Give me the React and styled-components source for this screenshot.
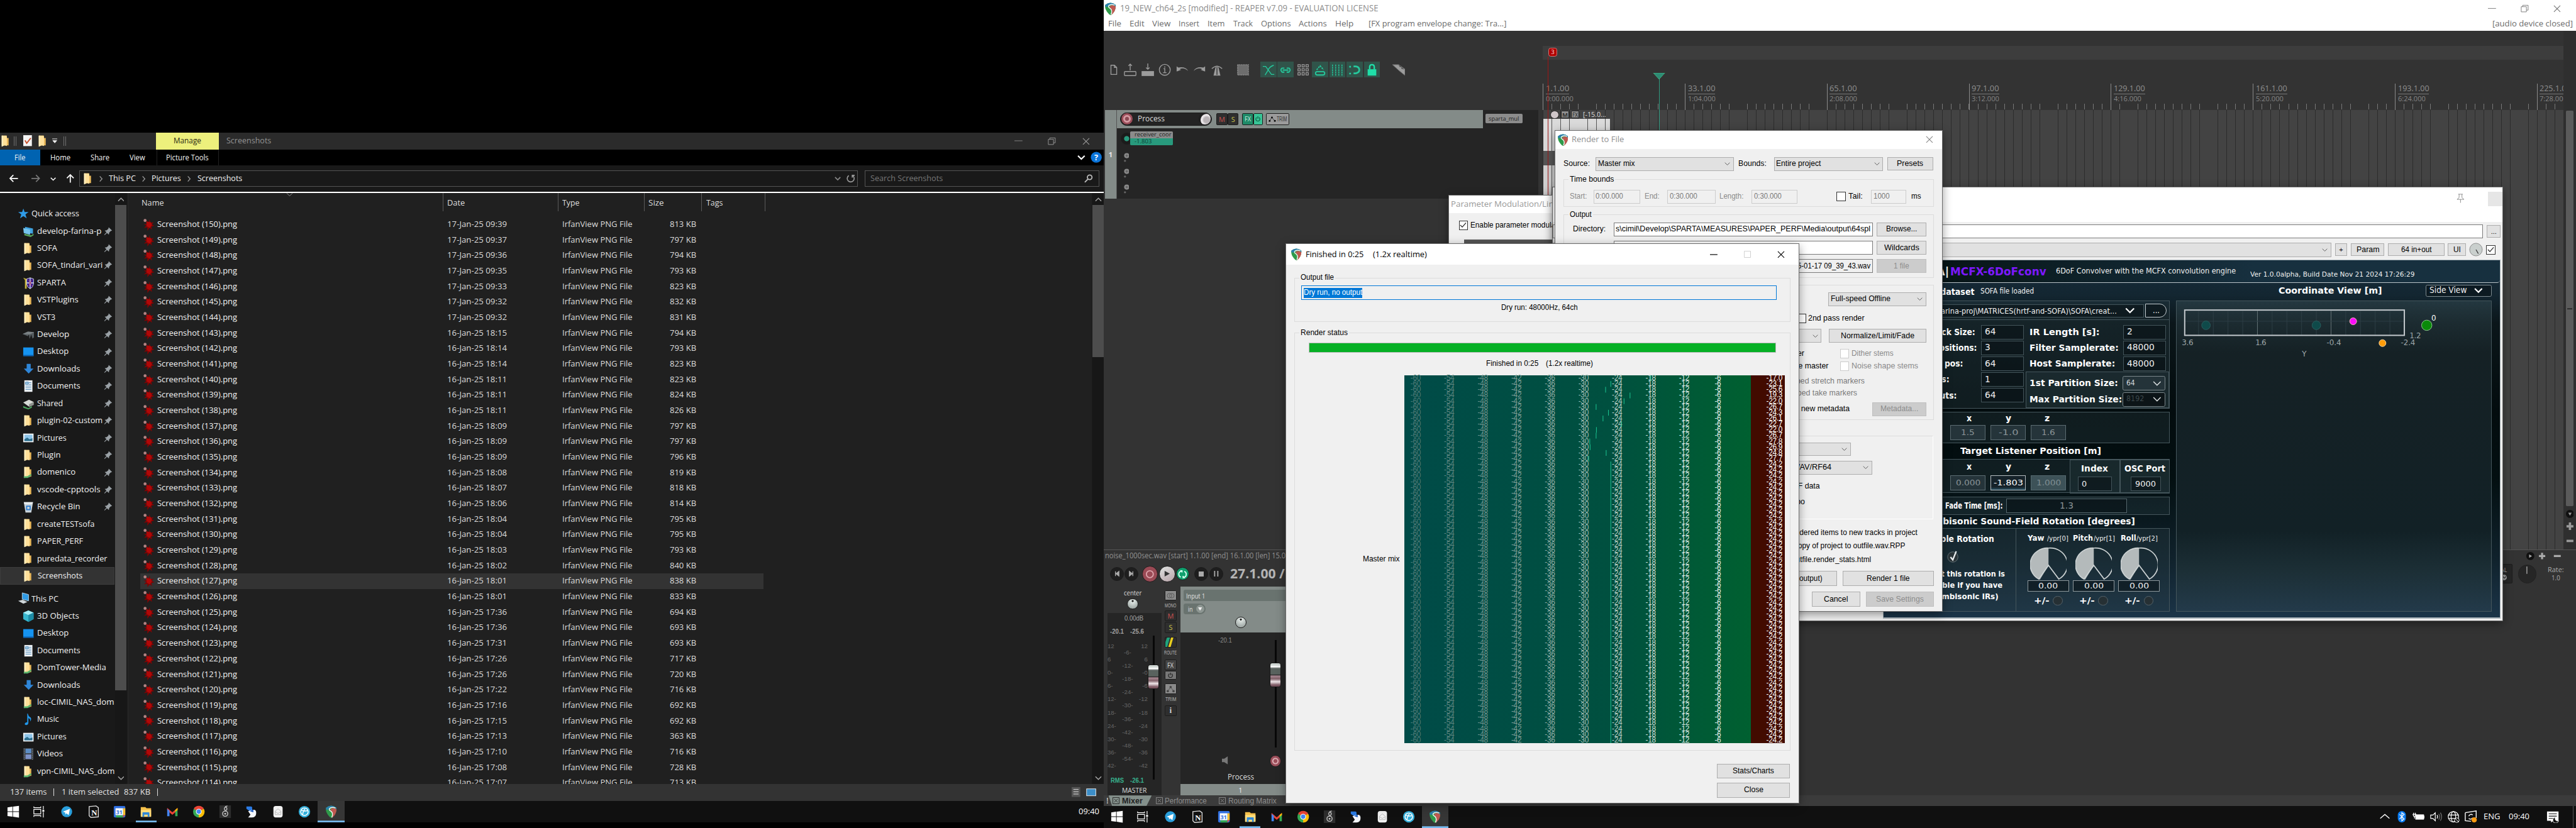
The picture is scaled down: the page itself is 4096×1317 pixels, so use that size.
import React, { useLayoutEffect, useRef, useState } from "react";
import styled, { createGlobalStyle, css } from "styled-components";

const UI = '"Open Sans", "Noto Sans", sans-serif';
const MS = '"Liberation Sans", Arial, sans-serif';
const PL = '"DejaVu Sans", Verdana, sans-serif';
const PLB = '"DejaVu Sans Condensed", "DejaVu Sans", sans-serif';

const Global = createGlobalStyle`
  html, body { margin: 0; padding: 0; background: #080808; overflow: hidden; }
  * { box-sizing: border-box; }
  svg { display: block; flex: none; }
`;

/* ---------- text that is fitted to a known advance width ---------- */
const TextBox = styled.span`
  display: block;
  flex: none;
  white-space: pre;
  line-height: 1.2;
  font-family: ${(p) => p.$f || UI};
  font-size: ${(p) => p.$s || 14.5}px;
  font-weight: ${(p) => (p.$b ? 700 : 400)};
  color: ${(p) => p.$c || "inherit"};
  ${(p) => p.$w && css`width: ${p.$w}px;`}
  margin-left: ${(p) => p.$ml || 0}px;
  margin-right: ${(p) => p.$mr || 0}px;
`;
const Fitted = styled.span`
  display: inline-block;
  transform-origin: 0 50%;
`;
function T({ w, s, c, b, f, ml, mr, children }) {
  const outer = useRef(null);
  const inner = useRef(null);
  const [k, setK] = useState(1);
  useLayoutEffect(() => {
    if (!w) return;
    const a = outer.current.getBoundingClientRect().width;
    const n = inner.current.getBoundingClientRect().width;
    if (n > 0) setK(a / n);
  }, [w]);
  return (
    <TextBox ref={outer} $w={w} $s={s} $c={c} $b={b} $f={f} $ml={ml} $mr={mr}>
      <Fitted ref={inner} style={k === 1 ? undefined : { transform: `scaleX(${k})` }}>{children}</Fitted>
    </TextBox>
  );
}
const M = (p) => <T f={MS} s={13.5} c="#000" {...p} />;

/* ---------- shared layout ---------- */
const Row = styled.div`
  display: flex;
  flex: none;
  align-items: ${(p) => p.$a || "center"};
  justify-content: ${(p) => (p.$end ? "flex-end" : p.$center ? "center" : "flex-start")};
  height: ${(p) => (p.$h ? p.$h + "px" : "auto")};
  margin-top: ${(p) => p.$mt || 0}px;
  padding-left: ${(p) => p.$pl || 0}px;
  padding-right: ${(p) => p.$pr || 0}px;
`;
const Col = styled.div`
  display: flex;
  flex: none;
  flex-direction: column;
  width: ${(p) => (p.$w ? p.$w + "px" : "auto")};
  margin-left: ${(p) => p.$ml || 0}px;
  padding-top: ${(p) => p.$pt || 0}px;
`;
const Grow = styled.div`flex: 1;`;

const Screen = styled.div`
  display: flex;
  width: 4480px;
  height: 1440px;
  zoom: 0.9142857;
  overflow: hidden;
  background: #000;
  font-family: ${UI};
`;
const LeftMonitor = styled.div`
  display: flex;
  flex-direction: column;
  width: 1920px;
  padding-top: 231px;
`;
const RightMonitor = styled.div`
  position: relative;
  display: flex;
  flex-direction: column;
  width: 2560px;
  background: #333;
  overflow: hidden;
`;

/* ---------- icons ---------- */
const Logo = ({ s = 22 }) => (
  <svg width={s * 0.86} height={s} viewBox="0 0 19 22">
    <path d="M.5 4Q9.500-3 18.500 4Q20 14 10.500 22Q8 22 5 18Q-1 11 .5 4Z" fill="#2f9a4a" />
    <path d="M.5 4Q9.500-3 18.500 4L18.800 7Q14 3 9 4Q5 4.500 4.500 8L.4 7Z" fill="#2a80ad" />
    <path d="M9 6Q14 3 18.800 7Q18.500 16 10.500 22Q15 13 8.500 9Q8 7 9 6Z" fill="#bf5850" />
    <path d="M17 4.500Q10 2 6.500 5.500Q5 8 9.500 10.500Q13.500 14 10.500 21" fill="none" stroke="#f4f4f4" strokeWidth="1.600" />
  </svg>
);
const Folder = ({ net }) => (
  <svg width="20" height="22" viewBox="0 0 20 22">
    <path d="M3 2h9v4h3v13h-12z" fill="#e9b85a" />
    <path d="M3 2h8l1 3v15l-4-1-5 2z" fill="#ffe09a" />
    <path d="M3 2h2v18l-2 1z" fill="#fff2c8" />
    {net && <path d="M2 18h6l7-4v3l-6 4H2z" fill="#58b36b" />}
  </svg>
);
const Pin = () => (
  <svg width="15" height="15" viewBox="0 0 14 14">
    <path d="M8 0.500L13.500 6l-2.300.6-2.400 2.700L8.300 12.400 5.200 9.600 1.500 13.200 .8 12.500 4.400 8.800 1.600 5.800l3.100-.4L7.400 3z" fill="#9aa1a6" />
  </svg>
);
const SideIcon = ({ k }) => {
  if (k === "folder") return <Folder />;
  if (k === "net") return <Folder net />;
  const g = {
    star: <path d="M10 2l2.200 6H19l-5.400 4 2.200 7L10 15l-5.800 4 2.200-7L1 8h6.800z" fill="#2f9be6" />,
    share: <g><path d="M4 4l14 3v9L5 14z" fill="#3fa2e0" /><path d="M1 6l12 3v9L2 15z" fill="#74c4ee" /><path d="M3 16l12 3 4-3v3l-5 3-11-3z" fill="#58a55c" /></g>,
    sparta: <g><path d="M1 2l6 2v17H4V6z" fill="#c8b440" /><path d="M7 4l6-2 6 2v9q-1 6-6 8-5-2-6-8z" fill="#2b1f9c" stroke="#ddd" strokeWidth="1" /><path d="M13 2v19M7 11h12" stroke="#e6dfe6" strokeWidth="1.500" /><path d="M9 5l8 12M17 5L9 17" stroke="#b02a4a" /></g>,
    drive: <g><path d="M0 10l9-4 11 1v9l-3 2-2-7-3 8-1-8-2 3z" fill="#555c60" /><path d="M0 10l9-4 11 1-8 4z" fill="#7b8285" /></g>,
    desk: <g><rect x="1" y="4" width="18" height="15" fill="#1593f0" /><rect x="1" y="17" width="18" height="2" fill="#0b5fb0" /></g>,
    down: <path d="M7 2h7v8h5l-8.500 9L2 10h5z" fill="#2f86d8" />,
    doc: <g><rect x="3" y="1" width="14" height="20" fill="#eef2f5" /><path d="M5 4h5v4H5zM5 11h10M5 14h10M5 17h10M11 5h4M11 8h4" stroke="#4b88b8" fill="#9cc4e0" /></g>,
    hand: <g><path d="M1 9l10-5 8 4v5l-8 3z" fill="#d7dad6" /><path d="M11 12l8-4v5l-8 4z" fill="#8d928e" /><path d="M1 15l9 4 6-4v3l-6 3-9-3z" fill="#4aa35c" /></g>,
    pic: <g><rect x="1" y="4" width="18" height="15" fill="#f2f5f7" /><rect x="3" y="6" width="14" height="11" fill="#8ec5ea" /><path d="M3 14l5-3 4 3 5-2v5H3z" fill="#2c6e8d" /></g>,
    bin: <g><path d="M2 3h16l-3 18H5z" fill="#c9d3da" /><path d="M2 3h16l-1 3H3z" fill="#eef2f4" /><path d="M7 10h6v6H7z" fill="none" stroke="#2a7bd0" strokeWidth="2" /></g>,
    pc: <g><path d="M8 1l11 3v11L8 12z" fill="#2f9be6" stroke="#bcd9ea" /><path d="M1 15l8-2 8 4-7 3z" fill="#cfd6da" /></g>,
    cube: <g><path d="M10 1l9 4v11l-9 5-9-5V5z" fill="#36b6cd" /><path d="M10 1l9 4-9 4-9-4z" fill="#a6ecf5" /><path d="M10 9l9-4v11l-9 5z" fill="#1c8ca6" /></g>,
    music: <path d="M9 1q1 5 5 7 2 3-1 7 1-5-3-6v8q0 4-4 4-3 0-2-3 1-2 4-2V1z" fill="#2196e8" />,
    video: <g><rect x="1" y="1" width="18" height="20" fill="#3b3f45" /><rect x="5" y="2" width="10" height="8" fill="#5c8dc4" /><rect x="5" y="12" width="10" height="8" fill="#7d93c9" /><path d="M3 2v19M17 2v19" stroke="#9aa" strokeDasharray="1.500 2" /></g>,
  }[k];
  return <svg width="20" height="22" viewBox="0 0 20 22">{g}</svg>;
};
const Splat = () => (
  <svg width="20" height="22" viewBox="0 0 20 22">
    <path d="M7 4l3 3 2-5 1 6 6-1-3 4 4 2-5 2 1 5-4-3-4 5 0-6-6 1 4-4-4-3 5 0z" fill="#7e0505" />
    <path d="M6 6l8 1 2 5-4 5-5-3z" fill="#b00808" />
    <circle cx="4" cy="4" r="2.600" fill="#b48484" />
  </svg>
);
const Chevron = ({ d = "down", s = 12, c = "#ccc", w = 1.5 }) => (
  <svg width={s} height={s} viewBox="0 0 12 12">
    <path d={{ down: "M1 3.500l5 5 5-5", up: "M1 8.500l5-5 5 5", right: "M4 1.500l4 4.500-4 4.500" }[d]} fill="none" stroke={c} strokeWidth={w} />
  </svg>
);
const Cross = ({ s = 13, c = "#777" }) => (
  <svg width={s} height={s} viewBox="0 0 13 13"><path d="M1 1l11 11M12 1L1 12" stroke={c} strokeWidth="1.200" /></svg>
);
const Arrow = ({ c = "#fff", r = 0 }) => (
  <svg width="17" height="17" viewBox="0 0 16 16"><g transform={`rotate(${r} 8 8)`}><path d="M15 8H2M7.500 2.500L2 8l5.500 5.500" fill="none" stroke={c} strokeWidth="1.800" /></g></svg>
);

/* ---------- explorer ---------- */
const ExplorerWin = styled.div`
  display: flex;
  flex-direction: column;
  height: 1162px;
  background: #191919;
  color: #f2f2f2;
`;
const ExTitle = styled(Row)`background: #2b2b2b;`;
const Manage = styled.div`
  display: flex; align-items: center; justify-content: center;
  width: 110px; height: 29px; margin-left: 156px;
  background: #edf07c;
`;
const VBar = styled.div`
  width: ${(p) => p.$t || 1}px; height: ${(p) => p.$h || 17}px;
  margin-left: ${(p) => p.$ml || 0}px; margin-right: ${(p) => p.$mr || 0}px;
  background: ${(p) => p.$c || "#707070"};
`;
const RibbonTabs = styled(Row)`background: #000;`;
const FileTab = styled.div`
  display: flex; align-items: center; justify-content: center;
  width: 70px; height: 28px; background: #0063b1;
`;
const NavBar = styled(Row)`background: #191919; border-bottom: 3px solid #fff;`;
const AddressBox = styled.div`
  display: flex; align-items: center;
  width: ${(p) => p.$w}px; height: 28px; margin-left: ${(p) => p.$ml}px; padding: 0 4px;
  border: 1px solid #545454;
`;
const ExBody = styled.div`display: flex; height: 1028px;`;
const Tree = styled.div`
  display: flex; width: 223px; background: #191919; border-right: 2px solid #2a2a2a;
`;
const TreeList = styled.div`width: 199px; padding-top: 21px;`;
const TreeRow = styled.div`
  display: flex; align-items: center; height: 30px; position: relative;
  margin-top: ${(p) => p.$mt || 0}px;
  padding-left: ${(p) => (p.$top ? 31 : 39)}px;
  ${(p) => p.$sel && css`background: #333; border: 1px solid #3c3c3c; padding-left: 38px; height: 30px;`}
`;
const TreeName = styled.div`
  flex: none; width: ${(p) => (p.$pinned ? 116 : 140)}px; margin-left: ${(p) => (p.$top ? 4 : 6)}px;
`;
const ScrollTrack = styled.div`
  display: flex; flex-direction: column; align-items: center;
  width: ${(p) => p.$w}px; margin-left: 1px; padding-top: 5px; background: #171717;
`;
const ScrollThumb = styled.div`
  width: 100%; height: ${(p) => p.$h}px; margin: 4px 0 auto; background: #4d4d4d;
`;
const Files = styled.div`flex: 1; background: #202020; overflow: hidden;`;
const HeaderRow = styled.div`display: flex; height: 32px; position: relative;`;
const HeaderCell = styled.div`
  display: flex; align-items: center; padding-top: 3px; width: ${(p) => p.$w}px; padding-left: ${(p) => p.$pl || 7}px;
  border-right: 1px solid #5a5a5a; color: #dedede;
`;
const SortMark = styled.div`position: absolute; left: 275px; top: -3px;`;
const FileRow = styled.div`
  display: flex; align-items: center; height: 27px; margin-left: 21px; width: 1084px; padding-left: 4px;
  background: ${(p) => (p.$sel ? "#333" : "transparent")};
`;
const SizeCell = styled.div`display: flex; justify-content: flex-end; width: 111px;`;
const StatusBar = styled(Row)`background: #333; color: #e0e0e0;`;

const tree = [
  ["Quick access", "star", 83, 2], ["develop-farina-p", "share", 112, 1], ["SOFA", "folder", 35, 1], ["SOFA_tindari_vari", "folder", 114, 1],
  ["SPARTA", "sparta", 50, 1], ["VSTPlugins", "folder", 72, 1], ["VST3", "folder", 32, 1], ["Develop", "drive", 56, 1], ["Desktop", "desk", 55, 1],
  ["Downloads", "down", 75, 1], ["Documents", "doc", 75, 1], ["Shared", "hand", 45, 1], ["plugin-02-custom", "folder", 114, 1], ["Pictures", "pic", 51, 1],
  ["Plugin", "folder", 41, 1], ["domenico", "net", 67, 1], ["vscode-cpptools", "folder", 110, 1], ["Recycle Bin", "bin", 75, 1], ["createTESTsofa", "folder", 100, 0],
  ["PAPER_PERF", "folder", 80, 0], ["puredata_recorder", "folder", 122, 0], ["Screenshots", "folder", 78, 3], ["This PC", "pc", 47, 4], ["3D Objects", "cube", 73, 0],
  ["Desktop", "desk", 55, 0], ["Documents", "doc", 75, 0], ["DomTower-Media", "net", 120, 0], ["Downloads", "down", 75, 0], ["loc-CIMIL_NAS_dom", "net", 134, 0],
  ["Music", "music", 38, 0], ["Pictures", "pic", 51, 0], ["Videos", "video", 45, 0], ["vpn-CIMIL_NAS_dom", "net", 135, 0],
];
const stamps = "17-Jan-25 09:39|813,17-Jan-25 09:37|797,17-Jan-25 09:36|794,17-Jan-25 09:35|793,17-Jan-25 09:33|823,17-Jan-25 09:32|832,17-Jan-25 09:32|831,16-Jan-25 18:15|794,16-Jan-25 18:14|793,16-Jan-25 18:14|823,16-Jan-25 18:11|823,16-Jan-25 18:11|824,16-Jan-25 18:11|826,16-Jan-25 18:09|797,16-Jan-25 18:09|797,16-Jan-25 18:09|796,16-Jan-25 18:08|819,16-Jan-25 18:07|818,16-Jan-25 18:06|814,16-Jan-25 18:04|795,16-Jan-25 18:04|795,16-Jan-25 18:03|793,16-Jan-25 18:02|840,16-Jan-25 18:01|838,16-Jan-25 18:01|833,16-Jan-25 17:36|694,16-Jan-25 17:36|693,16-Jan-25 17:31|693,16-Jan-25 17:26|717,16-Jan-25 17:26|720,16-Jan-25 17:22|716,16-Jan-25 17:16|692,16-Jan-25 17:15|692,16-Jan-25 17:13|363,16-Jan-25 17:10|716,16-Jan-25 17:08|728,16-Jan-25 17:07|713"
  .split(",").map((x) => x.split("|"));

function Explorer() {
  return (
    <ExplorerWin>
      <ExTitle $h={29}>
        <Folder /><VBar $ml={4} /><VBar $ml={2} $mr={13} />
        <svg width="16" height="20" viewBox="0 0 16 20"><rect width="15" height="19" fill="#f4f4f4" /><path d="M3 9l3 5 7-9" fill="none" stroke="#c8502c" strokeWidth="2" /></svg>
        <Row $pl={8} /><Folder />
        <Row $pl={6} /><svg width="9" height="9" viewBox="0 0 9 9"><path d="M0 1h9M1 4l3.500 4L8 4z" stroke="#eee" fill="#eee" /></svg>
        <VBar $ml={11} /><VBar $ml={2} />
        <Manage><T w={48} c="#2a2a12">Manage</T></Manage>
        <T w={78} c="#949494" ml={13}>Screenshots</T>
        <Grow />
        <svg width="14" height="14" viewBox="0 0 14 14"><path d="M0 6.500h14" stroke="#8a8a8a" /></svg>
        <Row $pl={44} /><svg width="14" height="14" viewBox="0 0 14 14"><path d="M1 4h9v9H1zM3.500 4V1.500H13V10h-3" fill="none" stroke="#9a9a9a" /></svg>
        <Row $pl={46} /><Cross c="#9a9a9a" /><Row $pl={25} />
      </ExTitle>
      <RibbonTabs $h={28}>
        <FileTab><T w={19}>File</T></FileTab>
        <T w={35} ml={17}>Home</T><T w={33} ml={35}>Share</T><T w={27} ml={35}>View</T>
        <VBar $h={28} $c="#222" $ml={20} />
        <T w={74} ml={16}>Picture Tools</T>
        <VBar $h={28} $c="#222" $ml={17} />
        <Grow /><Chevron s={14} c="#fff" w={2} /><Row $pl={9} />
        <svg width="20" height="20" viewBox="0 0 20 20"><circle cx="10" cy="10" r="9.500" fill="#0a74da" /><text x="10" y="15" fontSize="14" fontWeight="700" fontFamily="Open Sans" fill="#fff" textAnchor="middle">?</text></svg>
        <Row $pl={3} />
      </RibbonTabs>
      <NavBar $h={48} $pl={15}>
        <Arrow /><Row $pl={22} /><Arrow c="#777" r={180} /><Row $pl={17} /><Chevron s={10} c="#fff" w={2} /><Row $pl={16} /><Arrow r={90} />
        <AddressBox $w={1354} $ml={7}>
          <Folder /><Row $pl={6} />
          <Chevron d="right" c="#999" /><T w={47} ml={8}>This PC</T>
          <Row $pl={8} /><Chevron d="right" c="#999" /><T w={51} ml={8}>Pictures</T>
          <Row $pl={8} /><Chevron d="right" c="#999" /><T w={78} ml={8}>Screenshots</T>
          <Grow /><Chevron s={11} c="#888" w={2} /><Row $pl={9} />
          <svg width="15" height="15" viewBox="0 0 15 15"><path d="M10 2.200A6 6 0 1 1 4 2.500M10 6V2h4.500" fill="none" stroke="#999" strokeWidth="1.800" /></svg>
        </AddressBox>
        <AddressBox $w={408} $ml={12}>
          <T w={126} c="#777" ml={5}>Search Screenshots</T><Grow />
          <svg width="15" height="15" viewBox="0 0 15 15"><circle cx="9.500" cy="5.500" r="4" fill="none" stroke="#bbb" strokeWidth="2" /><path d="M6.500 8.500L1 14" stroke="#bbb" strokeWidth="2" /></svg>
          <Row $pl={6} />
        </AddressBox>
      </NavBar>
      <ExBody>
        <Tree>
          <TreeList>
            {tree.map(([name, ic, w, m], i) => {
              const top = m === 2 || m === 4;
              return (
                <TreeRow key={i} $top={top} $sel={m === 3} $mt={m === 4 ? 10 : 0}>
                  <SideIcon k={ic} /><TreeName $top={top} $pinned={m === 1}><T w={w}>{name}</T></TreeName>
                  {m === 1 && <Pin />}
                </TreeRow>
              );
            })}
          </TreeList>
          <ScrollTrack $w={20}><Chevron d="up" c="#aaa" /><ScrollThumb $h={844} /><Chevron c="#aaa" /><Row $h={4} /></ScrollTrack>
        </Tree>
        <Files>
          <HeaderRow>
            <SortMark><Chevron c="#999" w={1} s={12} /></SortMark>
            <HeaderCell $w={548} $pl={23}><T w={39}>Name</T></HeaderCell>
            <HeaderCell $w={200}><T w={31}>Date</T></HeaderCell>
            <HeaderCell $w={150}><T w={30}>Type</T></HeaderCell>
            <HeaderCell $w={100}><T w={27}>Size</T></HeaderCell>
            <HeaderCell $w={110}><T w={29}>Tags</T></HeaderCell>
          </HeaderRow>
          <Row $h={9} />
          {stamps.map(([d, kb], i) => (
            <FileRow key={i} $sel={i === 23}>
              <Splat /><T w={139} ml={5}>{`Screenshot (${150 - i}).png`}</T>
              <T w={104} ml={366} c="#dcdcdc">{d}</T>
              <T w={122} ml={96} c="#dcdcdc">IrfanView PNG File</T>
              <SizeCell><T w={46} c="#dcdcdc">{kb} KB</T></SizeCell>
            </FileRow>
          ))}
        </Files>
        <ScrollTrack $w={20}><Chevron d="up" c="#aaa" /><ScrollThumb $h={264} /><Chevron c="#aaa" /><Row $h={4} /></ScrollTrack>
      </ExBody>
      <StatusBar $h={29} $pl={17}>
        <T w={64}>137 items</T><VBar $c="#ddd" $h={13} $ml={12} />
        <T w={100} ml={13}>1 item selected</T><T w={46} ml={9}>837 KB</T><VBar $c="#ddd" $h={13} $ml={12} />
        <Grow />
        <svg width="44" height="18" viewBox="0 0 44 18"><rect x="0" y="0" width="15" height="17" fill="#555" /><path d="M3 4h9M3 8h9M3 12h9" stroke="#eee" /><rect x="26" y="3" width="16" height="12" fill="#3c8ec8" stroke="#eee" /></svg>
        <Row $pl={12} />
      </StatusBar>
    </ExplorerWin>
  );
}

/* ---------- taskbar ---------- */
const Bar = styled.div`
  display: flex; flex: none; align-items: stretch; height: 38px; background: #101010; color: #fff; padding-left: 1px;
`;
const Task = styled.div`
  display: flex; align-items: center; justify-content: center;
  width: ${(p) => p.$w || 46}px; height: 38px;
  background: ${(p) => (p.$active ? "#363636" : "transparent")};
  box-shadow: ${(p) => (p.$open ? "inset 0 -3px 0 #76b9ed" : "none")};
  margin: 0 ${(p) => (p.$inset ? 5 : 0)}px;
`;
function Taskbar({ children }) {
  const v = (el) => <svg width="22" height="22" viewBox="0 0 22 22">{el}</svg>;
  return (
    <Bar>
      <Task $w={43}>{v(<path d="M1 3.500l8.500-1.200v8.200H1zM10.500 2.200L21 .8v9.700H10.500zM1 11.500h8.500v8.200L1 18.500zM10.500 11.500H21v9.700l-10.500-1.400z" fill="#fff" />)}</Task>
      <Task $w={47}>{v(<g fill="none" stroke="#fff" strokeWidth="1.300"><path d="M2 2v2h12V2M2 20v-2h12v2M2 7h12v8H2z" /><path d="M18.500 1v6M18.500 12v9" /><path d="M17.500 8.500h2v2h-2z" fill="#fff" /></g>)}</Task>
      <Task $w={50}>{v(<g><circle cx="11" cy="11" r="9.500" fill="#2a9fdc" /><path d="M4.500 11l12-5-2 11-4-3-2 2v-3.500z" fill="#fff" /></g>)}</Task>
      <Task $w={44}>{v(<g><path d="M3 2l12-1 4 3v16l-13 1-3-3z" fill="#111" stroke="#ddd" strokeWidth="1.500" /><text x="12" y="17.500" fontFamily="Liberation Serif" fontWeight="700" fontSize="14" fill="#fff" textAnchor="middle">N</text></g>)}</Task>
      <Task>{v(<g><rect x="1" y="1" width="20" height="20" rx="2" fill="#2f6fe0" /><path d="M17 5h4v12h-4z" fill="#fbc02d" /><path d="M5 17h12v4H5z" fill="#34a853" /><path d="M17 17h4l-4 4z" fill="#e94335" /><rect x="4" y="5" width="13" height="12" fill="#fff" /><text x="10.500" y="15" fontSize="10" fontWeight="700" fontFamily="Open Sans" fill="#2f6fe0" textAnchor="middle">31</text></g>)}</Task>
      <Task $open $w={36} $inset>{v(<g><path d="M2 3h8l2 2h8v14H2z" fill="#f5c04a" /><path d="M2 8h18v12H2z" fill="#ffdc7c" /><path d="M5 20v-7q0-1 1-1h10q1 0 1 1v7h-3v-4H8v4z" fill="#2f88d8" /></g>)}</Task>
      <Task>{v(<g><path d="M2 4.500l9 7.500 9-7.500v4.500l-9 7.500L2 9z" fill="#ea4335" /><path d="M2 6l4 3.300V19H2z" fill="#4285f4" /><path d="M20 6l-4 3.300V19h4z" fill="#34a853" /><path d="M16 7.800l4-3.300V8l-4 3.500z" fill="#fbbc05" /></g>)}</Task>
      <Task>{v(<g><circle cx="11" cy="11" r="10" fill="#34a853" /><path d="M11 11L2.300 6A10 10 0 0 1 19.700 6z" fill="#ea4335" /><path d="M11 11l8.700-5A10 10 0 0 1 11 21z" fill="#fbbc05" /><circle cx="11" cy="11" r="5" fill="#fff" /><circle cx="11" cy="11" r="3.800" fill="#4285f4" /></g>)}</Task>
      <Task>{v(<g><rect x="1" y="0" width="20" height="22" fill="#2e2e2e" /><path d="M11 2l4-1M11 9q-3-3 0-6 3 0 3 3t-3 3" stroke="#bbb" fill="none" strokeWidth="1.500" /><circle cx="11" cy="14.500" r="4.500" fill="none" stroke="#ccc" strokeWidth="1.500" /><circle cx="11" cy="14.500" r="1.500" fill="#ccc" /></g>)}</Task>
      <Task>{v(<g><path d="M2 2h8q2 0 2 2v8l-4-2-6-4z" fill="#2b7be4" /><path d="M5 10l7-2q7-2 7 5 0 8-7 8H5l4-5z" fill="#f4f6fb" /><path d="M8 10l6-3v5z" fill="#1d5bc0" /></g>)}</Task>
      <Task>{v(<g><rect x="3" y="1" width="16" height="20" rx="4" fill="#f1f1f1" /><path d="M6 10l5-4 5 4v6H6zM6 11l5 3 5-3" fill="none" stroke="#b8b8b8" /></g>)}</Task>
      <Task>{v(<g><circle cx="11" cy="11" r="10" fill="#35b0dc" /><circle cx="11" cy="11" r="6.500" fill="none" stroke="#fff" strokeWidth="1.600" /><path d="M5 8q6 3 12 1M8 17q0-6 4-11" stroke="#fff" strokeWidth="1.600" fill="none" /></g>)}</Task>
      <Task $open $active><Logo s={22} /></Task>
      <Grow />
      {children}
    </Bar>
  );
}
const Tray = styled.div`display: flex; align-items: center; gap: 8px; padding-right: 4px;`;

/* ---------- reaper main window ---------- */
const TitleBar = styled(Row)`background: #fff; color: #8c8c8c;`;
const MenuBar = styled(Row)`background: #fff; color: #6b6b6b;`;
const Main = styled.div`display: flex; flex: none; height: 902px;`;
const TrackSide = styled.div`width: 763px; padding-top: 53px;`;
const ToolRow = styled.div`display: flex; align-items: center; height: 28px; padding-left: 3px;`;
const Tool = styled.div`
  display: flex; align-items: center; justify-content: center;
  width: ${(p) => p.$w || 30}px; height: 28px; margin-left: ${(p) => p.$ml || 0}px;
  background: ${(p) => (p.$on ? "#30544a" : "transparent")};
`;
const Track = styled.div`display: flex; margin: 56px 8px 0 2px; height: 155px; background: #252525;`;
const TrackStrip = styled.div`
  display: flex; flex-direction: column; align-items: center; justify-content: center;
  width: 20px; background: #838b88; border-right: 1px solid #555;
`;
const TrackHead = styled.div`
  display: flex; align-items: center; width: 637px; height: 32px; padding-left: 6px; background: #838b88;
`;
const NamePill = styled.div`
  display: flex; align-items: center; width: 160px; height: 23px; border-radius: 12px; background: #242424; border: 1px solid #1a1a1a;
`;
const Round = styled.div`
  display: flex; align-items: center; justify-content: center; flex: none;
  width: ${(p) => p.$d}px; height: ${(p) => p.$d}px; border-radius: 50%;
  margin-left: ${(p) => p.$ml || 0}px;
  background: ${(p) => p.$bg}; border: 1px solid ${(p) => p.$bc || "#1c1c1c"};
`;
const Mini = styled.div`
  display: flex; align-items: center; justify-content: center; flex: none;
  width: ${(p) => p.$w}px; height: ${(p) => p.$h || 20}px; margin-left: ${(p) => p.$ml || 0}px; margin-top: ${(p) => p.$mt || 0}px;
  background: ${(p) => p.$bg || "#2e2e2e"}; border: 1px solid #1c1c1c; border-radius: 2px;
`;
const Chip = styled.div`
  display: flex; align-items: center; width: 64px; height: 16px; margin: 7px 0 0 5px; padding-left: 5px;
  background: #8c8c8c; border-radius: 2px;
`;
const SendLabel = styled.div`
  display: flex; flex-direction: column; justify-content: space-around;
  width: 74px; height: 24px; margin-left: -4px; padding-left: 7px; border-radius: 2px;
  background: linear-gradient(#8c8c8c 50%, #289a7d 50%);
`;
const Arrange = styled.div`position: relative; width: 1775px; padding-top: 26px; overflow: hidden;`;
const RegionBand = styled.div`height: 24px; background: #3d3d3d;`;
const Ruler = styled.div`
  display: flex; height: 87px; padding-top: 42px; width: 1980px;
  background: repeating-linear-gradient(90deg, #777 0 1px, transparent 1px 15.4375px) 0 100% / 100% 10px no-repeat;
`;
const RulerCell = styled.div`
  display: flex; flex-direction: column; align-items: flex-start;
  flex: none; width: 247px; height: 45px; border-left: 1px solid #8a8a8a; padding: 1px 0 0 4px;
`;
const BarMark = styled.div`height: 17px; border-bottom: 1px solid #777; margin-bottom: 1px;`;
const Lanes = styled.div`
  height: 765px; background: repeating-linear-gradient(90deg, #2c2c2c 0 1px, #434343 1px 15.4375px);
`;
const MarkerFlag = styled.div`
  position: absolute; left: 10px; top: 29px; width: 15px; height: 16px; border-radius: 4px; background: #b00000; border: 1px solid #c77;
  display: flex; align-items: center; justify-content: center;
`;
const MarkerLine = styled.div`position: absolute; left: 9px; top: 44px; width: 1px; height: 850px; background: #a01616;`;
const PlayLine = styled.div`position: absolute; left: 202px; top: 82px; width: 1px; height: 850px; background: #2f9a80;`;
const PlayHead = styled.div`position: absolute; left: 191px; top: 73px;`;
const MediaItem = styled.div`
  position: absolute; left: 1px; top: 153px; width: 116px; height: 260px;
  background: repeating-linear-gradient(90deg, transparent 0 14.4px, #555 14.4px 15.4375px), linear-gradient(#dadada 56px, #555 56px 81px, #d0d0d0 81px);
`;
const ItemTag = styled.div`position: absolute; left: 13px; top: 138px; display: flex; align-items: center; gap: 3px; height: 15px;`;
const VScroll = styled.div`
  display: flex; flex-direction: column; align-items: center; width: 22px; padding-top: 139px; gap: 6px; background: #2f2f2f;
`;
const VThumb = styled.div`
  display: flex; align-items: center; justify-content: center; width: 14px; height: 688px; background: #5b5b5b; border-radius: 2px;
`;
const Status = styled(Row)`border-top: 1px solid #555; color: #929292;`;
const MixerArea = styled.div`display: flex; flex: none; height: 364px;`;
const Master = styled.div`display: flex; flex-direction: column; align-items: center; width: 100px; padding: 4px 0 0 0;`;
const MasterPanel = styled.div`width: 94px; height: 318px; margin: 6px 0 0 0; background: #252525; align-self: flex-end;`;
const Scale = styled.div`
  display: flex; flex-direction: column; width: ${(p) => p.$w}px; padding-top: ${(p) => p.$pt}px; align-items: ${(p) => p.$al};
`;
const ScaleRow = styled.div`display: flex; align-items: center; height: 23.150px;`;
const FaderSlot = styled.div`
  position: relative; width: 3px; height: ${(p) => p.$h}px; background: #080808; margin-left: ${(p) => p.$ml}px; margin-top: ${(p) => p.$mt || 0}px;
`;
const FaderCap = styled.div`
  position: absolute; left: -9px; top: ${(p) => p.$top}px; width: 20px; height: 42px; border-radius: 4px; border: 1px solid #161616;
  background: linear-gradient(#cfd6d3 0 3px, #fff 6px, #59625e 9px 19px, #222 20px, #a78791 22px, #806068 27px, #efe6e9 32px, #7a5560 38px);
`;
const Strip = styled.div`width: 1000px; background: #252525; margin-left: 5px;`;
const StripHead = styled.div`height: 80px; background: #838b88; padding: 6px 0 0 5px;`;
const InputBar = styled.div`display: flex; align-items: center; height: 20px; background: #69736f; border-radius: 3px; padding-left: 5px;`;
const InBtn = styled.div`
  display: flex; align-items: center; justify-content: space-between; width: 39px; height: 19px; margin-top: 4px; padding: 0 2px 0 8px;
  background: #69736f; border-radius: 4px 10px 10px 4px;
`;
const StripFoot = styled.div`height: 20px; background: #838b88; display: flex; align-items: center; padding-left: 101px;`;
const DockTabs = styled(Row)`background: #3b3b3b; color: #8e8e8e;`;
const DockTab = styled.div`
  display: flex; align-items: center; gap: 4px; width: ${(p) => p.$w}px; height: 18px; padding-left: 7px;
  background: ${(p) => (p.$on ? "#84908b" : "transparent")};
  clip-path: polygon(0 0, 100% 0, calc(100% - 9px) 100%, 6px 100%);
`;
const Knob = ({ d = 20, ml = 0 }) => <Round $d={d} $ml={ml} $bg="radial-gradient(circle at 50% 20%, #222 0 1.5px, #dfe6e3 2px, #a7b0ad 70%)" />;

function Toolbar() {
  const g = "#9c9c9c", t = "#26c99d";
  const v = (el, w = 22) => <svg width={w} height="22" viewBox="0 0 22 22" fill="none" strokeWidth="1.500">{el}</svg>;
  return (
    <ToolRow>
      <Tool $w={28}>{v(<path d="M6 3h6l4 4v12H6zM12 3v4h4" stroke={g} />)}</Tool>
      <Tool>{v(<g stroke={g}><rect x="1" y="14" width="20" height="7" rx="1" /><path d="M11 12V1M8 4l3-3 3 3" /></g>)}</Tool>
      <Tool>{v(<g stroke={g}><rect x="1" y="14" width="20" height="7" fill={g} /><path d="M11 0v10M8 7l3 3 3-3" /></g>)}</Tool>
      <Tool>{v(<g stroke={g}><circle cx="11" cy="11" r="9.500" /><path d="M9 9h2v7M8 16h6M11 5v2" /></g>)}</Tool>
      <Tool>{v(<path d="M1 5v9l8-3-3-1q7-4 15 3-4-8-17-6z" fill={g} />)}</Tool>
      <Tool>{v(<path d="M21 5v9l-8-3 3-1Q9 6 1 13q4-8 17-6z" fill={g} />)}</Tool>
      <Tool>{v(<g><path d="M9 4h4l4 17H5z" fill={g} /><path d="M11 20V7M3 9q8-7 16 0" stroke="#333" /><path d="M2 9q9-8 18 0" stroke={g} /></g>)}</Tool>
      <Tool $ml={15}>{v(<rect x="2" y="2" width="19" height="18" fill="#6d6d6d" stroke={g} strokeDasharray="1.500 1.500" />)}</Tool>
      <Tool $on $w={28} $ml={16}>{v(<path d="M1 5h5l10 14h5M20 3q-8 3-10 9l-5 8" stroke={t} />)}</Tool>
      <Tool $on $w={28} $ml={2}>{v(<path d="M9 8H5q-4 3 0 7h4M13 8h4q4 3 0 7h-4M6 11.500h10" stroke={t} strokeWidth="2" />)}</Tool>
      <Tool $w={30} $ml={1}>{v(<g stroke="#aaa" strokeWidth="1.200">{[2, 9, 16].map((x) => [2, 9, 16].map((y) => <rect key={x + "-" + y} x={x} y={y} width="4" height="4" />))}</g>)}</Tool>
      <Tool $on $w={28} $ml={1}>{v(<g stroke={t}><path d="M5 11l6-7 6 7" strokeDasharray="3 1.500" strokeWidth="2" /><rect x="3" y="14" width="16" height="6" rx="3" strokeWidth="2" /></g>)}</Tool>
      <Tool $on $w={28} $ml={2}>{v(<path d="M3 2v19M8.500 2v19M14 2v19M19.500 2v19" stroke={t} strokeDasharray="3 1" />)}</Tool>
      <Tool $on $w={28} $ml={2}>{v(<path d="M9 5h4q6 1 6 6t-6 6H9M3 4v3M3 16v3" stroke={t} strokeWidth="3" />)}</Tool>
      <Tool $on $w={28} $ml={2}>{v(<g><rect x="4" y="10" width="15" height="11" fill="#1fe0a8" /><path d="M7.500 10V6q0-4 4-4t4 4v4" stroke="#1fe0a8" strokeWidth="2.500" /></g>)}</Tool>
      <Tool $ml={18}>{v(<path d="M0 2h11l11 8v11L11 12zM11 2l2 4h3l0 3 4 1" fill={g} stroke="#666" strokeWidth="1" />)}</Tool>
    </ToolRow>
  );
}

function Reaper() {
  const marks = ["1.1.00|0:00.000", "33.1.00|1:04.000", "65.1.00|2:08.000", "97.1.00|3:12.000", "129.1.00|4:16.000", "161.1.00|5:20.000", "193.1.00|6:24.000", "225.1.00|7:28.000"].map((m) => m.split("|"));
  return (
    <>
      <TitleBar $h={30} $pl={2}>
        <Logo /><T w={449} ml={7} s={15}>19_NEW_ch64_2s [modified] - REAPER v7.09 - EVALUATION LICENSE</T><Grow />
        <svg width="14" height="14" viewBox="0 0 14 14"><path d="M0 7h14" stroke="#777" /></svg><Row $pl={43} />
        <svg width="14" height="14" viewBox="0 0 14 14"><path d="M1 4h9v9H1zM3.500 4V1.500H13V10h-3" fill="none" stroke="#777" /></svg><Row $pl={43} />
        <Cross c="#777" /><Row $pl={26} />
      </TitleBar>
      <MenuBar $h={24} $pl={7}>
        <T w={23}>File</T><T w={26} ml={14}>Edit</T><T w={32} ml={14}>View</T><T w={36} ml={14}>Insert</T><T w={30} ml={14}>Item</T><T w={34} ml={15}>Track</T>
        <T w={52} ml={14}>Options</T><T w={49} ml={14}>Actions</T><T w={32} ml={14}>Help</T><T w={240} ml={26}>[FX program envelope change: Tra...]</T>
        <Grow /><T w={140} mr={5}>[audio device closed]</T>
      </MenuBar>
      <Main>
        <TrackSide>
          <Toolbar />
          <Track>
            <TrackStrip><Grow /><T s={12} b c="#e8e8e8">1</T><Grow /></TrackStrip>
            <Col $w={637}>
              <TrackHead>
                <NamePill>
                  <Round $d={22} $bg="radial-gradient(circle, #8c4953 0 3px, #d59aa2 4px 6px, #9c4f5b 7px)" />
                  <T w={47} ml={8} c="#ddd">Process</T><Grow /><Round $d={22} $bg="radial-gradient(circle at 65% 60%, #b9b3b6 0 5px, #ece8ea 8px 10px, #222 11px)" />
                </NamePill>
                <Mini $w={20} $h={21} $ml={7}><T s={12} c="#c8504f">M</T></Mini><Mini $w={19} $h={21}><T s={12} c="#c9c24b">S</T></Mini>
                <Mini $w={20} $h={21} $ml={6} $bg="#1f8a68"><T s={11.5} w={11} c="#c8f0e0">FX</T></Mini><Mini $w={16} $h={21} $bg="#38c496"><svg width="9" height="9" viewBox="0 0 9 9"><path d="M2.500 2a3.500 3.500 0 1 0 4 0M4.500 0v4" stroke="#0d5c42" fill="none" strokeWidth="1.300" /></svg></Mini>
                <Mini $w={40} $h={21} $ml={6} $bg="#9b9b9b"><svg width="13" height="10" viewBox="0 0 13 10"><path d="M1 9l5-7 3 4 4 2" stroke="#333" fill="none" /><circle cx="6" cy="2" r="1.500" /><circle cx="2" cy="8" r="1.500" /><circle cx="11" cy="8" r="1.500" /></svg><T f={MS} s={12} w={18} ml={1} c="#333">TRIM</T></Mini>
              </TrackHead>
              <Row $mt={7} $h={22} $pl={7}>
                <Round $d={21} $bg="radial-gradient(circle, #289a7d 0 4px, #1b1b1b 5px)" />
                <SendLabel><T s={10} w={64} c="#222">receiver_coor</T><T s={10} w={30} c="#0c4034">-1.803</T></SendLabel>
              </Row>
              <Row $h={9} />
              {[0, 1, 2].map((i) => <Row key={i} $h={27.5} $pl={12}><svg width="9" height="18" viewBox="0 0 9 18"><circle cx="5" cy="5" r="4.500" fill="#8a8a8a" /><circle cx="5" cy="5" r="2" fill="#666" /><circle cx="2" cy="14" r="1.800" fill="#666" /></svg></Row>)}
            </Col>
            <Chip><T s={10.5} w={53} c="#222">sparta_mul</T></Chip>
          </Track>
        </TrackSide>
        <Arrange>
          <RegionBand />
          <Ruler>
            {marks.map(([a, b]) => <RulerCell key={a}><BarMark><T w={a.length * 6.8} s={13.5} c="#8f8f8f">{a}</T></BarMark><T w={48} s={11.5} c="#858585">{b}</T></RulerCell>)}
          </Ruler>
          <Lanes />
          <MediaItem />
          <PlayLine />
          <PlayHead><svg width="22" height="11" viewBox="0 0 22 11"><path d="M1 0h20L11 11z" fill="#2d8b74" stroke="#5fa" strokeWidth=".5" /></svg></PlayHead>
          <MarkerLine />
          <MarkerFlag><T s={10.5} c="#fdd">3</T></MarkerFlag>
          <ItemTag>
            <Round $d={15} $bg="#cfc6c9" /><Mini $w={14} $h={13} $ml={1} $bg="#8e8e8e"><T s={10.5} b c="#333">M</T></Mini><Mini $w={15} $h={13} $bg="#8e8e8e"><T w={10} s={10.5} c="#222">FX</T></Mini><T w={40} s={11.5} ml={3} c="#ddd">[-15.0...</T>
          </ItemTag>
        </Arrange>
        <VScroll>
          <VThumb><svg width="9" height="3" viewBox="0 0 9 3"><path d="M0 1.500h9" stroke="#222" strokeWidth="2" /></svg></VThumb>
          <svg width="14" height="60" viewBox="0 0 14 60"><circle cx="7" cy="7" r="7" fill="#111" /><path d="M4 5h6l-3 5z" fill="#999" /><path d="M7 22v13M1 28.500h12M1 54h12" stroke="#999" strokeWidth="4" /></svg>
        </VScroll>
      </Main>
      <Status $h={21} $pl={2}>
        <T w={314} s={13.5}>noise_1000sec.wav [start] 1.1.00 [end] 16.1.00 [len] 15.0</T><Grow />
        <svg width="62" height="14" viewBox="0 0 62 14"><circle cx="8" cy="7" r="7" fill="#101010" /><path d="M6 4l5 3-5 3z" fill="#aaa" /><path d="M23 7h11M28.500 1.500v11M49 7h12" stroke="#aaa" strokeWidth="3.500" /></svg><Row $pl={26} />
      </Status>
      <Row $h={43} $pl={10}>
        {["M4 2v8M10 2v8L5 6z", "M8 2v8M2 2v8l5-4z"].map((d, i) => <Round key={i} $d={24} $ml={i * 2} $bg="#1e1e1e"><svg width="12" height="12" viewBox="0 0 12 12"><path d={d} stroke="#aaa" fill="#aaa" strokeWidth="1.500" /></svg></Round>)}
        <Round $d={28} $ml={6} $bg="#9a4a55"><svg width="16" height="16" viewBox="0 0 16 16"><circle cx="8" cy="8" r="6" fill="none" stroke="#dba3ab" strokeWidth="2" /></svg></Round>
        <Round $d={28} $ml={2} $bg="linear-gradient(150deg, #dfe3e1, #b9a3a9)"><svg width="12" height="12" viewBox="0 0 12 12"><path d="M2 1l9 5-9 5z" fill="#333" /></svg></Round>
        <Round $d={23} $ml={1} $bg="#10a06e"><svg width="16" height="16" viewBox="0 0 16 16"><path d="M5 13a5.500 5.500 0 0 1 1-10.500M11 3a5.500 5.500 0 0 1-1 10.500M4 2l3 0 0 3M12 14l-3 0 0-3" stroke="#d6fff0" fill="none" strokeWidth="2" /></svg></Round>
        <Round $d={24} $ml={9} $bg="#1e1e1e"><svg width="9" height="9" viewBox="0 0 9 9"><rect width="9" height="9" fill="#aaa" /></svg></Round>
        <Round $d={24} $ml={2} $bg="#1e1e1e"><svg width="9" height="10" viewBox="0 0 9 10"><path d="M1.500 0v10M7 0v10" stroke="#aaa" strokeWidth="2" /></svg></Round>
        <T w={95} ml={12} s={23} b c="#b4b4b4">27.1.00 /</T><Grow />
        <Mini $w={30} $h={34} $bg="#262626"><Col><T s={9.5} c="#aaa">AL</T><Round $d={12} $bg="#999"><Chevron s={7} c="#222" w={2} /></Round></Col></Mini>
        <Round $d={32} $ml={9} $bg="#262626" $bc="#222"><svg width="2" height="28" viewBox="0 0 2 28"><path d="M1 1v13" stroke="#aaa" strokeWidth="1.500" /></svg></Round>
        <Col $ml={20} $w={28}><T w={28} s={11.500} c="#aaa">Rate:</T><T s={11.5} w={15} ml={6} c="#aaa">1.0</T></Col><Row $pl={21} />
      </Row>
      <Mixer />
      <DockTabs $h={18} $pl={4}>
        <T s={14} c="#ddd" w={4}>!</T>
        <DockTab $on $w={75}><XBox c="#222" /><M w={36} s={14} b c="#222">Mixer</M></DockTab>
        <DockTab $w={110}><XBox c="#8e8e8e" /><M w={73} s={14} c="#8e8e8e">Performance</M></DockTab>
        <DockTab $w={115}><XBox c="#8e8e8e" /><M w={84} s={14} c="#8e8e8e">Routing Matrix</M></DockTab>
      </DockTabs>
    </>
  );
}
const XBox = ({ c }) => <svg width="12" height="12" viewBox="0 0 12 12"><path d="M.5.500h11v11H.500zM3 3l6 6M9 3L3 9" fill="none" stroke={c} /></svg>;

function Mixer() {
  const steps = [12, 6, 0, 6, 12, 18, 24, 30, 36, 42];
  const lab = (s, i) => <ScaleRow key={i}><T f={MS} s={10.5} c="#666">{s}</T></ScaleRow>;
  const left = steps.map((n, i) => (i < 2 ? `${n}` : `${n}-`));
  const right = steps.map((n, i) => (i < 2 ? `${n}` : `-${n}`));
  const mid = [6, 12, 18, 24, 30, 36, 42, 48, 54].map((n) => `-${n}-`);
  return (
    <MixerArea>
      <Master>
        <T s={12} w={31} c="#ddd">center</T><Row $h={3} /><Knob d={19} />
        <MasterPanel>
          <Row $h={20} $pl={30}><T f={MS} s={11} w={33} c="#a0a0a0">0.00dB</T></Row>
          <Row $h={26} $pl={5}><T f={MS} s={11} b w={24} c="#a0a0a0">-20.1</T><T f={MS} s={11} b w={24} ml={11} c="#a0a0a0">-25.6</T></Row>
          <Row $a="flex-start" $h={238}>
            <Scale $w={22} $pt={0} $al="flex-start">{left.map(lab)}</Scale>
            <Scale $w={26} $pt={11} $al="center">{mid.map(lab)}</Scale>
            <Scale $w={22} $pt={0} $al="flex-end">{right.map(lab)}</Scale>
            <FaderSlot $h={250} $ml={9} $mt={-6}><FaderCap $top={50} /></FaderSlot>
          </Row>
          <Row $h={16} $pl={6}><T f={MS} s={11} b w={23} c="#37b08c">RMS</T><T f={MS} s={11} b w={24} ml={11} c="#37b08c">-26.1</T></Row>
          <Row $h={16} $pl={25}><T s={12} w={43} c="#ddd">MASTER</T></Row>
        </MasterPanel>
      </Master>
      <Col $w={28} $pt={7} $ml={0}>
        <Mini $w={20} $h={18} $ml={6} $bg="#8a8a8a"><svg width="14" height="12" viewBox="0 0 14 12"><g fill="none" stroke="#555"><circle cx="5" cy="6" r="4" /><circle cx="9" cy="6" r="4" /></g></svg></Mini>
        <Row $h={16} $pl={6}><M s={10.5} w={20} c="#b5b5b5">MONO</M></Row>
        <Mini $w={20} $h={19} $mt={1} $ml={6}><T s={12} c="#c8504f">M</T></Mini><Mini $w={20} $h={19} $mt={1} $ml={6}><T s={12} c="#c9c24b">S</T></Mini>
        <Mini $w={20} $h={19} $mt={7} $ml={6}><svg width="18" height="17" viewBox="0 0 18 17"><path d="M0 17V8L3 0h5L3 17z" fill="#1fa37c" /><path d="M5 17L10 0h4L9 17z" fill="#e8cf1e" /></svg></Mini>
        <Row $h={17} $pl={5}><M s={10.5} w={22} c="#b5b5b5">ROUTE</M></Row>
        <Mini $w={20} $h={19} $mt={3} $ml={6} $bg="#444"><T s={12} w={11} c="#ddd">FX</T></Mini>
        <Mini $w={20} $h={15} $mt={1} $ml={6} $bg="#777"><svg width="9" height="9" viewBox="0 0 9 9"><path d="M2.500 2a3.500 3.500 0 1 0 4 0M4.500 0v4" stroke="#222" fill="none" strokeWidth="1.300" /></svg></Mini>
        <Mini $w={20} $h={19} $mt={7} $ml={6} $bg="#8a8a8a"><svg width="14" height="11" viewBox="0 0 14 11"><path d="M2 9l5-7 5 7" stroke="#555" fill="none" /><circle cx="7" cy="2" r="2" fill="#444" /><circle cx="2" cy="9" r="2" fill="#444" /><circle cx="12" cy="9" r="2" fill="#444" /></svg></Mini>
        <Row $h={17} $pl={7}><M s={10.5} w={19} c="#b5b5b5">TRIM</M></Row>
        <Mini $w={20} $h={19} $mt={2} $ml={6}><T s={13} b c="#ddd" f={'"Liberation Serif", serif'}>i</T></Mini>
      </Col>
      <Strip>
        <StripHead>
          <InputBar><T s={12} w={33} c="#e2e2e2">Input 1</T></InputBar>
          <InBtn><T s={12} w={8} c="#e2e2e2">in</T><Round $d={15} $bg="#8d9692" $bc="#8d9692"><svg width="7" height="6" viewBox="0 0 7 6"><path d="M0 0h7L3.500 6z" fill="#eee" /></svg></Round></InBtn>
          <Row $h={28} $pl={90}><Knob d={20} /></Row>
        </StripHead>
        <Row $h={264} $a="flex-start">
          <Col $w={130} $pt={8}>
            <Row $h={14} $pl={66}><T f={MS} s={11} w={24} c="#8a8a8a">-20.1</T></Row>
            <Row $h={190} /><Row $h={22} $pl={72}><svg width="11" height="14" viewBox="0 0 11 14"><path d="M0 4h4l6-4v14l-6-4H0z" fill="#777" /></svg></Row>
            <Row $h={34} $pl={82}><T w={46} s={13} c="#ddd">Process</T></Row>
          </Col>
          <Col $w={50} $pt={14} $ml={25}>
            <FaderSlot $h={187} $ml={9}><FaderCap $top={39} /></FaderSlot>
            <Row $h={46}><Round $d={20} $bg="radial-gradient(circle, #9c4f5b 0 3px, #dfb0b6 4px 5px, #9c4f5b 6px)" /></Row>
          </Col>
        </Row>
        <StripFoot><T s={12} c="#eee">1</T></StripFoot>
      </Strip>
    </MixerArea>
  );
}

/* ---------- dialog primitives ---------- */
const Win = styled.div`
  position: absolute;
  left: ${(p) => p.$x - 1920}px; top: ${(p) => p.$y}px; width: ${(p) => p.$w}px; height: ${(p) => p.$h}px;
  background: #f0f0f0; overflow: hidden;
`;
const Shadow = styled(Win)`box-shadow: 0 4px 16px rgba(0, 0, 0, 0.45); outline: 1px solid #6a6a6a; z-index: ${(p) => p.$z || 1};`;
const WinTitle = styled(Row)`background: #fff;`;
const Field = styled.div`
  display: flex; flex: none; align-items: center; justify-content: ${(p) => (p.$right ? "flex-end" : "flex-start")};
  width: ${(p) => p.$w}px; height: ${(p) => p.$h || 24}px; margin-left: ${(p) => p.$ml || 0}px; padding: 0 3px;
  background: ${(p) => (p.$off ? "#f0f0f0" : p.$bg || "#fff")}; border: 1px solid ${(p) => (p.$off ? "#ccc" : p.$bc || "#7a7a7a")};
`;
const Btn = styled.div`
  display: flex; flex: none; align-items: center; justify-content: center;
  width: ${(p) => p.$w}px; height: ${(p) => p.$h || 24}px; margin-left: ${(p) => p.$ml || 0}px;
  background: ${(p) => (p.$off ? "#cccccc" : "#e1e1e1")}; border: 1px solid ${(p) => (p.$off ? "#bfbfbf" : "#adadad")};
`;
const SelectBox = styled(Btn)`justify-content: space-between; padding: 0 5px 0 3px;`;
const Select = ({ w, ml, h, children }) => <SelectBox $w={w} $ml={ml} $h={h}>{children || <span />}<Chevron s={10} c="#555" w={1.2} /></SelectBox>;
const CheckBox = styled.div`
  display: flex; flex: none; align-items: center; justify-content: center;
  width: 16px; height: 16px; margin-left: ${(p) => p.$ml || 0}px; margin-right: 4px; background: #fff; border: 1px solid ${(p) => (p.$off ? "#ccc" : "#333")};
`;
const Tick = () => <svg width="12" height="11" viewBox="0 0 12 11"><path d="M1 5.500l3.500 3.500L11 1.500" fill="none" stroke="#222" strokeWidth="1.300" /></svg>;
const Group = styled.div`
  position: relative; flex: none; margin: ${(p) => p.$mt || 0}px 14px 0; height: ${(p) => p.$h}px; border: 1px solid #dcdcdc;
`;
const Legend = styled.div`position: absolute; left: 8px; top: -9px; padding: 0 2px; background: #f0f0f0;`;

function ParamWindow() {
  return (
    <Shadow $x={2520} $y={340} $w={400} $h={300}>
      <WinTitle $h={31} $pl={3}><T w={195} c="#999">Parameter Modulation/Link -</T></WinTitle>
      <Row $h={42} $pl={17}><CheckBox><Tick /></CheckBox><M w={172}>Enable parameter modulation,</M></Row>
      <Row $mt={4} $h={30} $pl={26}><DarkStrip /></Row>
    </Shadow>
  );
}
const DarkStrip = styled.div`width: 300px; height: 30px; background: #555;`;

/* ---------- render dialog ---------- */
function RenderWindow() {
  return (
    <Shadow $x={2705} $y={227} $w={672} $h={836} $z={3}>
      <WinTitle $h={32} $pl={4}><Logo s={21} /><T w={91} ml={6} c="#8f8f8f">Render to File</T><Grow /><Cross c="#888" /><Row $pl={15} /></WinTitle>
      <Row $mt={13} $h={26} $pl={14}>
        <M w={46}>Source:</M><Select w={240} ml={10}><M w={64}>Master mix</M></Select>
        <M w={49} ml={8}>Bounds:</M><Select w={190} ml={13}><M w={78}>Entire project</M></Select>
        <Btn $w={80} $ml={7} $h={23}><M w={46}>Presets</M></Btn>
      </Row>
      <Group $mt={14} $h={48}>
        <Legend><M w={77}>Time bounds</M></Legend>
        <Row $h={24} $mt={17} $pl={10}>
          <M w={30} c="#8a8a8a">Start:</M><Field $off $w={81} $ml={11}><M w={48} c="#7a7a7a">0:00.000</M></Field>
          <M w={26} ml={8} c="#8a8a8a">End:</M><Field $off $w={84} $ml={14}><M w={48} c="#7a7a7a">0:30.000</M></Field>
          <M w={42} ml={6} c="#8a8a8a">Length:</M><Field $off $w={80} $ml={14}><M w={48} c="#7a7a7a">0:30.000</M></Field>
          <CheckBox $ml={68} /><M w={25}>Tail:</M><Field $off $w={61} $ml={15}><M w={28} c="#7a7a7a">1000</M></Field><M w={17} ml={9}>ms</M>
        </Row>
      </Group>
      <Group $mt={13} $h={110}>
        <Legend><M w={38}>Output</M></Legend>
        <Row $mt={13} $h={24} $pl={15}><M w={57}>Directory:</M><Field $w={450} $ml={15} $right><M w={443}>s\cimil\Develop\SPARTA\MEASURES\PAPER_PERF\Media\output\64spl</M></Field><Btn $w={86} $ml={7}><M w={54}>Browse...</M></Btn></Row>
        <Row $mt={8} $h={24} $pl={87}><Field $w={450} /><Btn $w={86} $ml={7}><M w={61}>Wildcards</M></Btn></Row>
        <Row $mt={8} $h={24} $pl={87}><Field $w={450} $right $bg="#f0f0f0"><M w={127}>5-01-17 09_39_43.wav</M></Field><Btn $w={86} $ml={7} $off><M w={27} c="#8d8d8d">1 file</M></Btn></Row>
      </Group>
      <Group $mt={12} $h={236}>
        <Row $end $mt={12} $h={25} $pr={12}><Select w={100} /><Select w={170} ml={51}><M w={104}>Full-speed Offline</M></Select></Row>
        <Row $end $mt={12} $h={18} $pr={119}><CheckBox /><M w={98}>2nd pass render</M></Row>
        <Row $end $mt={9} $h={25} $pr={12}><Select w={100} /><Btn $w={169} $ml={13}><M w={128}>Normalize/Limit/Fade</M></Btn></Row>
        <Row $end $mt={9} $h={18} $pr={69}><M mr={62}>Dither master</M><CheckBox $off /><M w={73} c="#8a8a8a">Dither stems</M></Row>
        <Row $end $mt={4} $h={18} $pr={26}><M mr={20}>Noise shape master</M><CheckBox $off /><M w={116} c="#8a8a8a">Noise shape stems</M></Row>
        <Row $end $mt={8} $h={18} $pr={119}><M c="#7a7a7a">snapped stretch markers</M></Row>
        <Row $end $mt={3} $h={18} $pr={132}><M c="#7a7a7a">snapped take markers</M></Row>
        <Row $end $mt={7} $h={24} $pr={12}><M mr={39}>Embed new metadata</M><Btn $w={94} $off><M w={66} c="#8d8d8d">Metadata...</M></Btn></Row>
      </Group>
      <FormatBox>
        <Row $end $mt={10} $h={25} $pr={142}><Select w={150} /></Row>
        <Row $end $mt={7} $h={25} $pr={105}><Select w={190}><M w={68} ml={47}>WAV/RF64</M></Select></Row>
        <Row $end $mt={11} $h={18} $pr={196}><M>BWF data</M></Row>
        <Row $end $mt={9} $h={18} $pr={222}><M>tempo</M></Row>
      </FormatBox>
      <Row $end $mt={14} $h={18} $pr={42}><M w={224}>rendered items to new tracks in project</M></Row>
      <Row $end $mt={5} $h={18} $pr={64}><M w={193}>copy of project to outfile.wav.RPP</M></Row>
      <Row $end $mt={6} $h={18} $pr={123}><M w={138}>outfile.render_stats.html</M></Row>
      <Row $end $mt={10} $h={27} $pr={14}><Btn $w={160} $h={26}><M ml={68} w={40}>output)</M></Btn><Btn $w={158} $ml={10} $h={26}><M w={75}>Render 1 file</M></Btn></Row>
      <Row $end $mt={9} $h={27} $pr={14}><Btn $w={84} $h={26}><M w={42}>Cancel</M></Btn><Btn $w={118} $ml={10} $h={26} $off><M w={83} c="#8d8d8d">Save Settings</M></Btn></Row>
    </Shadow>
  );
}
const FormatBox = styled.div`margin: 27px 15px 0; height: 146px; border: 2px solid #fff; border-top-color: #dcdcdc; border-bottom-color: #fff;`;

/* ---------- finished dialog ---------- */
const Selected = styled.div`background: #0078d7; height: 17px; display: flex; align-items: center;`;
const Progress = styled.div`height: 15px; margin: 17px 25px 0; background: #06b025; outline: 1px solid #bcbcbc;`;
const MeterGrid = styled.div`
  position: relative; display: flex; width: 662px; height: 640px; padding-left: 0;
  background: linear-gradient(90deg, #004b48, #00503f 60%, #006030) 0 0 / 603px 100% no-repeat, #420b00;
`;
const MeterCol = styled.div`
  flex: none; width: 58.4px; color: ${(p) => p.$c}; font: 13px/10px ${MS}; letter-spacing: -0.3px;
`;
const MeterCell = styled.div`display: flex; justify-content: center; width: 40px; height: 10px;`;
const PeakCol = styled.div`flex: 1; text-align: right; padding-right: 4px; font: 13px/10px ${MS}; color: #fff; letter-spacing: -0.3px;`;
const PeakCell = styled.div`height: 10px;`;
const Trace = styled.svg`position: absolute; left: 0; top: 0;`;
const peaks = [-17.0, -23.1, -25.6, -19.3, -22.0, -26.7, -24.3, -26.1, -22.7, -22.0, -26.7, -27.8, -26.9, -24.8, -27.7];
const traceX = [428, 358.5, 349.5, 392, 381.5, 333, 354.5, 345, 377, 333.5, 333, 322, 322.5, 350.5, 320];
const meterTone = ["#4f7a77", "#5d8580", "#70938d", "#809f98", "#90aca4", "#a2bcb4", "#bccfc8", "#d0dfd9", "#dfeae5", "#e7f1ed"];
function FinishedWindow() {
  const rows = Array.from({ length: 64 }, (_, i) => i);
  return (
    <Shadow $x={2237} $y={424} $w={891} $h={973} $z={4}>
      <WinTitle $h={37} $pl={9}>
        <Logo s={21} /><T w={101} ml={7} c="#000">Finished in 0:25</T><T w={94} ml={16} c="#000">(1.2x realtime)</T><Grow />
        <svg width="13" height="13" viewBox="0 0 13 13"><path d="M0 6.500h13" stroke="#000" strokeWidth="1.300" /></svg><Row $pl={46} />
        <svg width="12" height="12" viewBox="0 0 12 12"><path d="M.5.500h11v11H.500z" fill="none" stroke="#ccc" /></svg><Row $pl={46} /><Cross c="#000" /><Row $pl={24} />
      </WinTitle>
      <Group $mt={22} $h={77}>
        <Legend><M w={58}>Output file</M></Legend>
        <Row $mt={13} $h={25} $pl={11}><Field $w={827} $bc="#0078d7" $bg="#f0f0f0" $h={25}><Selected><M w={102} c="#fff">Dry run, no output</M></Selected></Field></Row>
        <Row $mt={4} $h={18} $center $pr={10}><M w={133}>Dry run: 48000Hz, 64ch</M></Row>
      </Group>
      <Group $mt={19} $h={727}>
        <Legend><M w={82}>Render status</M></Legend>
        <Progress />
        <Row $mt={12} $h={18} $center $pr={10}><M w={91}>Finished in 0:25</M><M w={82} ml={12}>(1.2x realtime)</M></Row>
        <Row $mt={11} $end $pr={9}>
          <M w={64} mr={8}>Master mix</M>
          <MeterGrid>
            {[60, 54, 48, 42, 36, 30, 24, 18, 12, 6].map((n, c) => (
              <MeterCol key={n} $c={meterTone[c]}>{rows.map((r) => <MeterCell key={r}>-{n}</MeterCell>)}</MeterCol>
            ))}
            <PeakCol>{rows.map((r) => <PeakCell key={r}>{(peaks[r] ?? -24.2).toFixed(1)}</PeakCell>)}</PeakCol>
            <Trace width="603" height="640">{rows.map((r) => <rect key={r} x={traceX[r] ?? 358.5} y={r * 10} width="1" height="10" fill="#1fd09a" />)}</Trace>
          </MeterGrid>
        </Row>
      </Group>
      <Row $end $mt={22} $h={27} $pr={15}><Btn $w={127} $h={26}><M w={72}>Stats/Charts</M></Btn></Row>
      <Row $end $mt={6} $h={27} $pr={15}><Btn $w={127} $h={26}><M w={34}>Close</M></Btn></Row>
    </Shadow>
  );
}

/* ---------- fx window with convolver plug-in ---------- */
const Plugin = styled.div`
  margin-left: 575px; width: 1074px; height: 624px; border: 2px solid #a7b1b7; border-bottom-width: 3px; color: #fff;
  background: linear-gradient(#162c3c 0, #132631 60px, #0b161a 110px, #030c0e 260px, #030f11 380px, #10222c 520px, #1b3448 100%);
`;
const PluginHead = styled.div`
  display: flex; align-items: center; justify-content: flex-end; height: 39px; padding-right: 149px;
  background: linear-gradient(90deg, #04100f, #17303f 60%); border-bottom: 2px solid #b9c2c7; border-radius: 0 5px 5px 0;
`;
const Panel = styled.div`
  position: relative; flex: none; height: ${(p) => p.$h}px; margin-top: ${(p) => p.$mt || 0}px;
  border: 1px solid #45565c; background: rgba(45, 65, 72, 0.3);
`;
const PField = styled.div`
  display: flex; flex: none; align-items: center; justify-content: ${(p) => (p.$c ? "center" : "flex-start")};
  width: ${(p) => p.$w}px; height: ${(p) => p.$h || 25}px; margin-left: ${(p) => p.$ml || 0}px; padding: 0 ${(p) => (p.$c ? 0 : 6)}px;
  border: 1px solid ${(p) => p.$bc || "#43545a"}; background: ${(p) => p.$bg || "rgba(5,14,17,.5)"}; border-radius: ${(p) => p.$r || 0}px;
`;
const MoreBtn = styled(PField)`border-radius: 0 12px 12px 0;`;
const SubPanel = styled.div`
  width: ${(p) => p.$w}px; height: ${(p) => p.$h}px; border: 1px solid #45565c; background: rgba(60, 85, 92, 0.2);
  display: flex; flex-direction: column; flex: none;
`;
const B = (p) => <T f={PLB} s={15} b c="#fff" {...p} />;
const V = (p) => <T f={PL} s={14.5} c="#f0f0f0" {...p} />;
const Dial = () => (
  <svg width="64" height="60" viewBox="0 0 64 60">
    <path d="M32 33L17 58A30 29 0 0 1 32 3z" fill="#b4babb" />
    <path d="M32 3A30 29 0 0 1 50 57L32 33L15 57A30 29 0 0 1 32 3" fill="none" stroke="#cdd3d4" strokeWidth="1.800" />
  </svg>
);
const Vec = ({ vals, styles }) => (
  <Row $a="flex-start">
    {vals.map((v, i) => (
      <PField key={i} $c $w={61} $ml={i ? 9 : 0} $h={26} $bc={styles?.[i]?.bc || "#5c6c72"} $bg={styles?.[i]?.bg || "#25343a"}>
        <V w={v.length * 8.6 - (v.length > 3 ? 0 : 2)} s={14} c={styles?.[i]?.c || "#8b9498"}>{v}</V>
      </PField>
    ))}
  </Row>
);
const Axes = () => <Row $h={22}><B w={9} ml={28}>x</B><B w={10} ml={59}>y</B><B w={9} ml={58}>z</B></Row>;
const Heading = styled.div`display: flex; flex: none; align-items: center; height: ${(p) => p.$h}px; padding-left: ${(p) => p.$pl}px;`;

function CoordView() {
  const grid = Array.from({ length: 14 }, (_, i) => i + 1);
  const txt = { fontFamily: "DejaVu Sans", fontSize: 13, fill: "#9ea7aa" };
  return (
    <svg width="547" height="120" viewBox="3785 525 547 120">
      {grid.map((i) => <path key={i} d={`M${3797.500 + i * 25.6} 542v42`} stroke={i === 5 || i === 10 ? "#6a787c" : "#2f4046"} />)}
      <path d="M3799 560h382" stroke="#2f4046" />
      <rect x="3799" y="540.500" width="382" height="44" fill="none" stroke="#c3c9cd" strokeWidth="2.200" />
      <circle cx="3836" cy="567" r="7.500" fill="#0f4a4a" stroke="#2b5f5f" /><circle cx="4028" cy="567" r="7.500" fill="#0f4a4a" stroke="#2b5f5f" />
      <circle cx="4092" cy="560" r="6" fill="#f90cf9" stroke="#fbb" /><circle cx="4143" cy="598" r="6" fill="#ff9c0a" stroke="#fda" />
      <circle cx="4220" cy="567" r="9" fill="#0a8a0a" stroke="#9c9" />
      <text x="4228" y="559" {...txt} fill="#fff">0</text>
      <text x="4190" y="589" {...txt} textLength="20">1.2</text>
      <text x="3794" y="602" {...txt} textLength="20">3.6</text><text x="3922" y="602" {...txt} textLength="19">1.6</text>
      <text x="4046" y="602" {...txt} textLength="25">-0.4</text><text x="4175" y="602" {...txt} textLength="25">-2.4</text>
      <text x="4003" y="621" {...txt}>Y</text>
    </svg>
  );
}
const MapPanel = styled.div`
  width: 549px; height: 541px; border: 1px solid #45565c; margin-top: 4px;
  background: linear-gradient(rgba(48, 70, 78, 0.600), #152125 90px, #122126 400px, #1c2f36 470px, #233a4a);
`;
const TinyNote = (p) => <B s={14} {...p} />;

function FxWindow() {
  const left = [["ck Size:", "64", 10], ["positions:", "3", 7], ["pos:", "64", 31], ["s:", "1", 55], ["outs:", "64", 42]];
  return (
    <Shadow $x={2700} $y={326} $w={1652} $h={754} $z={2}>
      <WinTitle $h={60} $a="flex-start" $end>
        <Row $h={38}><svg width="14" height="17" viewBox="0 0 14 17"><path d="M3 1h8M4.500 1v6L1 10h12L9.500 7V1M7 10v6" fill="none" stroke="#888" /></svg></Row>
        <Row $pl={41} /><Row $mt={8}><Ghost /></Row>
      </WinTitle>
      <Row $mt={5} $h={24}><Field $w={1618} $h={24} /><Btn $w={24} $ml={7} $h={22}><M s={12}>...</M></Btn></Row>
      <Row $mt={6} $h={27}>
        <Select w={1354} h={25} /><Btn $w={21} $ml={7} $h={22}><M s={12}>+</M></Btn><Btn $w={58} $ml={7} $h={22}><M w={40}>Param</M></Btn>
        <Btn $w={98} $ml={6} $h={22}><M w={53}>64 in+out</M></Btn><Btn $w={32} $ml={6} $h={22}><M w={13}>UI</M></Btn>
        <Row $pl={5} /><svg width="24" height="24" viewBox="0 0 24 24"><circle cx="12" cy="12" r="11" fill="#c9cfcd" stroke="#888" /><path d="M12 12l4 7" stroke="#333" strokeWidth="1.300" /></svg>
        <CheckBox $ml={6}><Tick /></CheckBox>
      </Row>
      <Row $h={4} />
      <Plugin>
        <PluginHead>
          <B s={20} w={22}>A|</B><B s={20} w={167} ml={2} c="#7d18ff">MCFX-6DoFconv</B>
          <V s={13} w={313} ml={17}>6DoF Convolver with the MCFX convolution engine</V>
          <Row $mt={12}><V s={12} w={286} ml={24}>Ver 1.0.0alpha, Build Date Nov 21 2024 17:26:29</V></Row>
        </PluginHead>
        <Row $a="flex-start" $pl={6}>
          <Col $w={491}>
            <Row $h={31} $pt={6}><B s={16} w={75} ml={77}>R dataset</B><V s={12.5} w={93} ml={10}>SOFA file loaded</V></Row>
            <Panel $h={188}>
              <Row $end $mt={5} $h={23} $pr={4}>
                <PField $w={460} $h={23}><Grow /><V s={14} w={306}>arina-proj\MATRICES(hrtf-and-SOFA)\SOFA\creat...</V><Row $pl={15} /><Chevron s={17} c="#fff" w={1.700} /><Row $pl={9} /></PField>
                <MoreBtn $c $w={37} $h={24} $ml={2} $bc="#c3cbcf"><V w={12}>...</V></MoreBtn>
              </Row>
              <Rule />
              <Row $a="flex-start" $mt={7}>
                <Col $w={237}>
                  {left.map(([n, v, g], i) => <Row key={i} $end $h={27.500}><B mr={g}>{n}</B><PField $w={75}><V w={v.length * 9.6}>{v}</V></PField></Row>)}
                </Col>
                <Col $w={252}>
                  {[["IR Length [s]:", "2", 122], ["Filter Samplerate:", "48000", 155], ["Host Samplerate:", "48000", 149]].map(([n, v, w]) => (
                    <Row key={n} $h={27.500} $pl={9}><B w={w}>{n}</B><Grow /><PField $w={75}><V w={v.length * 9.6}>{v}</V></PField><Row $pl={5} /></Row>
                  ))}
                  <Row $pl={3}><SubPanel $w={249} $h={63}>
                    {[["1st Partition Size:", "64", 154, "#d8dcde", "#243339", 15], ["Max Partition Size:", "8192", 161, "#3d484c", "#0c1417", 31]].map(([n, v, w, c, bg, vw], i) => (
                      <Row key={n} $h={28} $mt={i ? 0 : 5} $pl={5}><B w={w}>{n}</B><Grow /><PField $w={75} $bc="#7b878b" $bg={bg} $r={3}><V s={12.5} w={vw} c={c}>{v}</V><Grow /><Chevron s={15} c="#dfe3e4" w={1.300} /></PField><Row $pl={5} /></Row>
                    ))}
                  </SubPanel></Row>
                </Col>
              </Row>
            </Panel>
            <Panel $h={55} $mt={5}>
              <Row $a="flex-start" $pl={109}><Col><Axes /><Vec vals={["1.5", "-1.0", "1.6"]} /></Col></Row>
            </Panel>
            <Heading $h={27} $pl={127}><B w={245} s={15.500}>Target Listener Position [m]</B></Heading>
            <Panel $h={60}>
              <Row $a="flex-start" $pl={109}>
                <Col $w={207} $pt={2}><Axes /><Row $h={4} /><Vec vals={["0.000", "-1.803", "1.000"]} styles={[null, { bc: "#b5bdc1", bg: "linear-gradient(#16232a 80%, #2c5364)", c: "#fff" }, { bc: "#55686e", bg: "#3d5258", c: "#819094" }]} /></Col>
                <SubPanel $w={88} $h={59}><Row $center $h={29}><B w={47}>Index</B></Row><Row $pl={13}><PField $w={60}><V s={14}>0</V></PField></Row></SubPanel>
                <SubPanel $w={86} $h={59}><Row $center $h={29}><B w={71}>OSC Port</B></Row><Row $pl={17}><PField $c $w={53}><V s={14} w={36}>9000</V></PField></Row></SubPanel>
              </Row>
            </Panel>
            <Panel $h={32} $mt={6}><Row $h={30} $end $pr={73}><B w={100}>Fade Time [ms]:</B><PField $c $w={210} $ml={6} $bc="#55676d"><V w={24} c="#8b9498">1.3</V></PField></Row></Panel>
            <Row $end $h={23} $pr={60}><B w={362} s={15.500}>Ambisonic Sound-Field Rotation [degrees]</B></Row>
            <Panel $h={145}>
              <Row $a="flex-start">
                <RotationNote>
                  <Row $end $h={36} $pr={37}><B s={15}>Enable Rotation</B></Row>
                  <Row $end $h={24} $pr={98}><svg width="22" height="22" viewBox="0 0 22 22"><circle cx="11" cy="12" r="9" fill="#2a3438" stroke="#66757a" /><path d="M7 12l4 5 6-15" fill="none" stroke="#e8ecee" strokeWidth="2.500" /></svg></Row>
                  <Row $h={8} />
                  <Row $end $h={20} $pr={18}><TinyNote w={176}>(Note that this rotation is</TinyNote></Row>
                  <Row $end $h={20} $pr={23}><TinyNote w={140}>suitable if you have</TinyNote></Row>
                  <Row $end $h={20} $pr={29}><TinyNote w={109}>Ambisonic IRs)</TinyNote></Row>
                </RotationNote>
                {[["Yaw", "/ypr[0]", 29, 5], ["Pitch", "/ypr[1]", 35, 1], ["Roll", "/ypr[2]", 27, 1]].map(([a, b, w, g], i) => (
                  <Col key={a} $w={72} $ml={i ? 7 : 20}>
                    <Row $h={26} $mt={4} $center><B s={12.500} w={w}>{a}</B><V s={12} w={37} ml={g}>{b}</V></Row>
                    <Row $center><Dial /></Row>
                    <PField $c $w={72} $h={19} $bc="#8e989c"><V w={34} s={14}>0.00</V></PField>
                    <Row $h={32} $pl={11}><B w={27} s={15}>+/-</B><Round $d={17} $ml={6} $bg="#263034" $bc="#55626a" /></Row>
                  </Col>
                ))}
              </Row>
            </Panel>
          </Col>
          <Col $w={549} $ml={11}>
            <Row $h={27} $pl={179}><B w={180} s={16}>Coordinate View [m]</B><Grow /><PField $w={115} $h={21} $bc="#7f8c91" $r={3}><V w={65}>Side View</V><Grow /><Chevron s={15} c="#fff" w={2} /><Row $pl={8} /></PField></Row>
            <MapPanel><CoordView /></MapPanel>
          </Col>
        </Row>
      </Plugin>
    </Shadow>
  );
}
const Ghost = styled.div`width: 25px; height: 25px; background: #e6e6e6;`;
const Rule = styled.div`height: 1px; margin-top: 4px; background: #45565c;`;
const RotationNote = styled.div`flex: none; width: 223px; height: 143px; border-right: 1px solid #45565c;`;

export default function App() {
  return (
    <>
      <Global />
      <Screen>
        <LeftMonitor>
          <Explorer />
          <Taskbar><Tray><T w={36} mr={4}>09:40</T></Tray></Taskbar>
        </LeftMonitor>
        <RightMonitor>
          <Reaper />
          <Taskbar>
            <Tray>
              <svg width="22" height="22" viewBox="0 0 22 22"><path d="M3 14l8-7 8 7" fill="none" stroke="#fff" strokeWidth="1.500" /></svg>
              <svg width="22" height="22" viewBox="0 0 22 22"><rect x="4" y="1" width="14" height="20" rx="7" fill="#0a7bf0" /><path d="M7 7l8 8-4 3V4l4 3-8 8" fill="none" stroke="#fff" strokeWidth="1.300" /></svg>
              <svg width="22" height="22" viewBox="0 0 22 22"><rect x="5" y="7" width="15" height="9" fill="#fff" /><path d="M20 9v5M2 4v3M5 4v3M1 7h5l-1 3H2zM3.500 10v4" stroke="#fff" strokeWidth="1.400" fill="none" /></svg>
              <svg width="22" height="22" viewBox="0 0 22 22"><path d="M1 8h4l4-4v14l-4-4H1zM12 8q2 3 0 6" fill="none" stroke="#fff" strokeWidth="1.300" /><path d="M15 6q3 5 0 10M18 4q4 7 0 14" fill="none" stroke="#777" strokeWidth="1.300" /></svg>
              <svg width="22" height="22" viewBox="0 0 22 22"><g fill="none" stroke="#fff" strokeWidth="1.300"><circle cx="11" cy="11" r="9" /><ellipse cx="11" cy="11" rx="4" ry="9" /><path d="M2 8h18M2 14h18" /></g><circle cx="17" cy="17" r="4" fill="#101010" stroke="#fff" /><path d="M14 14l6 6" stroke="#fff" /></svg>
              <svg width="22" height="22" viewBox="0 0 22 22"><path d="M1 4l19-3v12M1 4v14l10 1" fill="none" stroke="#fff" strokeWidth="1.500" /><path d="M7 10q3-5 7-2M14 13q-3 4-7 1" fill="none" stroke="#fff" strokeWidth="1.500" /><circle cx="16.500" cy="16.500" r="4.500" fill="#ff9c12" /></svg>
              <T w={29} ml={3}>ENG</T><T w={36} ml={7}>09:40</T>
              <Row $pl={14} />
              <svg width="22" height="22" viewBox="0 0 22 22"><path d="M1 2h20v16h-9l-4 3v-3H1z" fill="#fff" /><path d="M4 6h14M4 10h14M4 14h8" stroke="#101010" strokeWidth="1.200" /><path d="M16 12a5 5 0 1 0 5 6 4 4 0 0 1-5-6z" fill="#101010" stroke="#fff" /></svg>
              <Row $pl={8} /><VBar $h={38} $c="#555" />
            </Tray>
          </Taskbar>
          <ParamWindow />
          <FxWindow />
          <RenderWindow />
          <FinishedWindow />
        </RightMonitor>
      </Screen>
    </>
  );
}
